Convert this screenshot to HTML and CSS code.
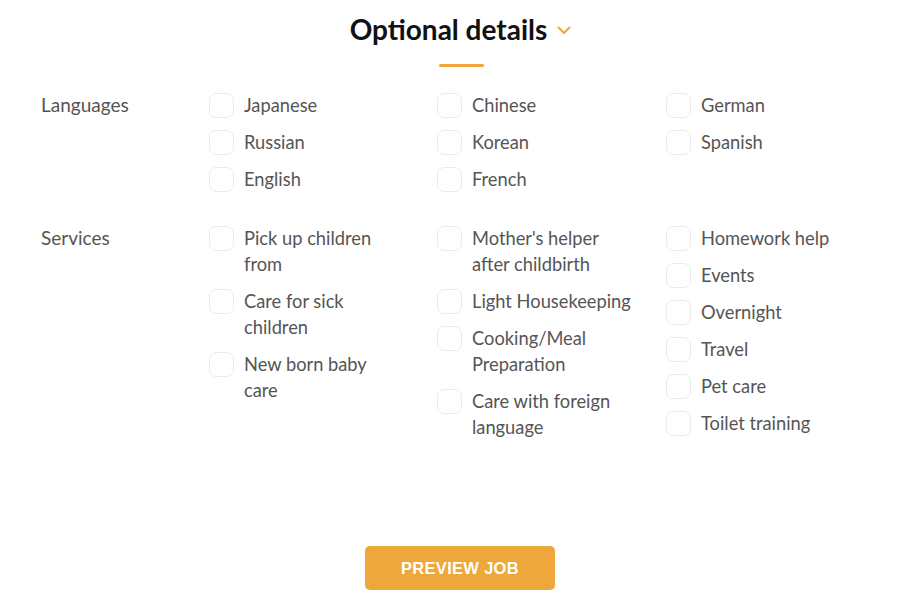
FILE: index.html
```html
<!DOCTYPE html>
<html>
    <head>
        <link rel="stylesheet" href="styles.css">
    </head>
    <body>
        <div class="details">
            <div class="details-head">
                <h2>Optional details</h2>
                <svg class="chevron" width="14" height="9" viewBox="0 0 14 9">
                    <path d="M1.5 1.5 L7 7 L12.5 1.5" fill="none" stroke="#eea73a" stroke-width="2" stroke-linecap="round" stroke-linejoin="round"/>
                </svg>
            </div>
            <div class="accent"></div>

            <div class="group">
                <div class="group-label">Languages</div>
                <div class="col">
                    <label class="option"><span class="box"></span><span class="text">Japanese</span></label>
                    <label class="option"><span class="box"></span><span class="text">Russian</span></label>
                    <label class="option"><span class="box"></span><span class="text">English</span></label>
                </div>
                <div class="col">
                    <label class="option"><span class="box"></span><span class="text">Chinese</span></label>
                    <label class="option"><span class="box"></span><span class="text">Korean</span></label>
                    <label class="option"><span class="box"></span><span class="text">French</span></label>
                </div>
                <div class="col">
                    <label class="option"><span class="box"></span><span class="text">German</span></label>
                    <label class="option"><span class="box"></span><span class="text">Spanish</span></label>
                </div>
            </div>

            <div class="group">
                <div class="group-label">Services</div>
                <div class="col narrow">
                    <label class="option"><span class="box"></span><span class="text">Pick up children from</span></label>
                    <label class="option"><span class="box"></span><span class="text">Care for sick children</span></label>
                    <label class="option"><span class="box"></span><span class="text">New born baby care</span></label>
                </div>
                <div class="col">
                    <label class="option"><span class="box"></span><span class="text">Mother's helper after childbirth</span></label>
                    <label class="option"><span class="box"></span><span class="text">Light Housekeeping</span></label>
                    <label class="option"><span class="box"></span><span class="text">Cooking/Meal Preparation</span></label>
                    <label class="option"><span class="box"></span><span class="text">Care with foreign language</span></label>
                </div>
                <div class="col">
                    <label class="option"><span class="box"></span><span class="text">Homework help</span></label>
                    <label class="option"><span class="box"></span><span class="text">Events</span></label>
                    <label class="option"><span class="box"></span><span class="text">Overnight</span></label>
                    <label class="option"><span class="box"></span><span class="text">Travel</span></label>
                    <label class="option"><span class="box"></span><span class="text">Pet care</span></label>
                    <label class="option"><span class="box"></span><span class="text">Toilet training</span></label>
                </div>
            </div>

            <div class="actions">
                <button class="preview">PREVIEW JOB</button>
            </div>
        </div>
    </body>
</html>
```

FILE: styles.css
```css
body {
    margin: 0;
    background-color: #ffffff;
    font-family: Lato, "Noto Sans", sans-serif;
    color: #555555;
}
.details {
    padding-top: 11px;
}
.details-head {
    display: flex;
    justify-content: center;
    align-items: center;
    gap: 10px;
    padding-right: 2px;
}
.details-head h2 {
    margin: 0;
    font-size: 28px;
    line-height: 36px;
    font-weight: 700;
    color: #111111;
}
.chevron {
    margin-top: 2px;
}
.accent {
    width: 45px;
    height: 3px;
    border-radius: 2px;
    background-color: #eea73a;
    margin: 17px auto 0;
}
.group {
    display: grid;
    grid-template-columns: 168px 228px 229px 1fr;
    padding-left: 41px;
    margin-top: 25px;
    font-size: 18.3px;
    line-height: 26px;
}
.group + .group {
    margin-top: 33px;
}
.group-label {
    font-size: 19px;
}
.col {
    display: flex;
    flex-direction: column;
    gap: 11px;
}
.option {
    display: flex;
    align-items: flex-start;
    gap: 10px;
}
.box {
    flex: none;
    width: 23px;
    height: 23px;
    margin-top: 1px;
    border: 1.5px solid #ececec;
    border-radius: 7px;
    background-color: #ffffff;
}
.text {
    max-width: 163px;
}
.narrow .text {
    max-width: 150px;
}
.actions {
    display: flex;
    justify-content: center;
    margin-top: 106px;
    padding-right: 3px;
}
.preview {
    width: 190px;
    height: 44px;
    border: none;
    border-radius: 5px;
    background-color: #eea73a;
    color: #ffffff;
    font-family: "Liberation Sans", Arial, sans-serif;
    font-size: 16.5px;
    font-weight: bold;
    letter-spacing: 0.3px;
}
```
